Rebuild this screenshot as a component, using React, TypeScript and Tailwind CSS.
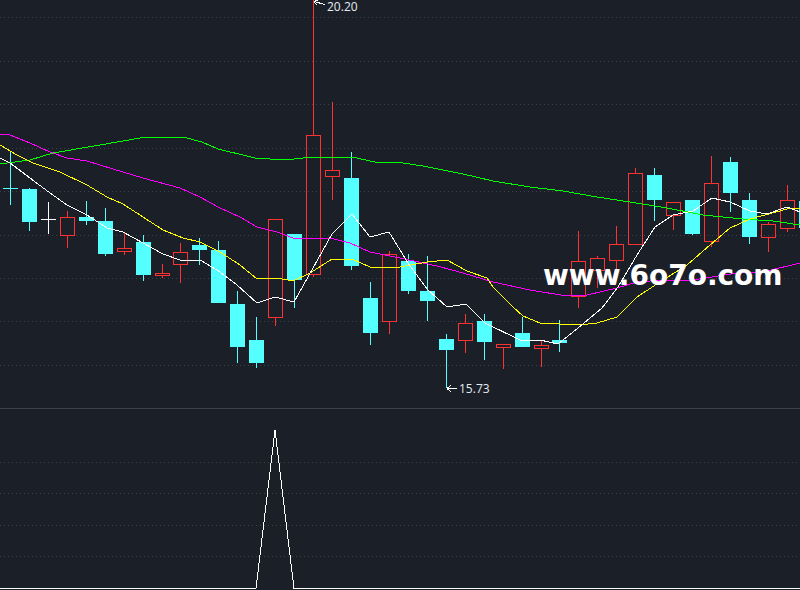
type Candle = [kind: "up" | "down" | "flat" | "flatw", high: number, low: number, top: number, bottom: number]

const candles: Candle[] = [
  ["flat", 152, 205, 188, 189],
  ["down", 188, 231, 189, 222],
  ["flatw", 202, 234, 219, 220],
  ["up", 211, 248, 217, 235],
  ["down", 201, 225, 217, 221],
  ["down", 208, 256, 221, 254],
  ["up", 233, 255, 248, 251],
  ["down", 235, 281, 242, 275],
  ["up", 264, 278, 273, 275],
  ["up", 243, 283, 252, 264],
  ["down", 238, 265, 245, 250],
  ["down", 241, 303, 250, 303],
  ["down", 291, 363, 304, 347],
  ["down", 317, 368, 340, 363],
  ["up", 219, 326, 219, 317],
  ["down", 234, 308, 234, 280],
  ["up", 0, 277, 135, 274],
  ["up", 102, 200, 170, 176],
  ["down", 152, 270, 178, 266],
  ["down", 282, 345, 298, 333],
  ["up", 251, 334, 254, 321],
  ["down", 254, 294, 261, 291],
  ["down", 256, 321, 291, 301],
  ["down", 334, 388, 339, 350],
  ["up", 314, 353, 323, 340],
  ["down", 314, 360, 321, 342],
  ["up", 344, 369, 344, 347],
  ["down", 317, 347, 333, 347],
  ["up", 341, 367, 345, 348],
  ["down", 320, 352, 340, 343],
  ["up", 231, 308, 261, 296],
  ["up", 256, 288, 258, 270],
  ["up", 226, 273, 244, 260],
  ["up", 168, 244, 173, 244],
  ["down", 168, 221, 175, 200],
  ["up", 202, 230, 202, 215],
  ["down", 200, 235, 200, 234],
  ["up", 156, 247, 183, 241],
  ["down", 157, 212, 162, 193],
  ["down", 193, 244, 200, 237],
  ["up", 222, 252, 224, 237],
  ["up", 185, 232, 200, 228],
  ["down", 201, 228, 201, 228],
]

const green = "0,164 30,160 53,153 100,145 140,138 153,137 183,137 202,142 218,149 255,158 285,160 303,158 323,157 352,157 375,162 403,163 423,166 443,170 463,174 493,181 530,187 563,191 597,197 630,202 667,208 703,215 743,219 773,221 800,225"
const magenta = "0,134 10,135 30,143 50,152 67,158 87,161 113,169 143,178 180,188 200,197 220,208 240,217 257,227 277,232 293,238 330,238 350,243 370,252 400,258 437,266 463,273 493,282 530,290 567,296 587,295 617,288 637,282 663,280 693,280 737,273 763,272 800,263"
const yellow = "0,145 17,155 33,163 60,172 87,185 107,197 123,204 143,217 163,230 183,238 200,242 220,252 240,265 257,279 277,278 293,281 310,273 332,259 352,259 370,267 400,267 427,262 447,260 467,271 487,278 493,287 513,307 523,316 540,323 560,324 580,325 597,323 617,317 637,297 663,280 687,265 710,245 730,228 750,219 787,209 800,208"
const white = "0,158 10,163 30,178 50,193 67,205 87,215 107,228 123,232 143,243 163,254 180,260 202,261 220,272 237,285 257,303 275,297 294,302 313,268 332,234 352,214 370,237 389,232 408,263 427,289 447,307 466,304 485,323 522,341 540,340 558,344 578,328 602,308 618,287 637,255 655,227 673,215 693,211 712,198 730,202 750,211 767,214 787,207 800,212"

const RED = "#ff3232"
const CYAN = "#54ffff"

function CandleMark({ c, i }: { c: Candle; i: number }) {
  const [kind, high, low, top, bottom] = c
  const x = Math.floor(10.4 + 18.95 * i)
  if (kind === "flat" || kind === "flatw") {
    const color = kind === "flat" ? CYAN : "#ffffff"
    return (
      <g fill={color}>
        <rect x={x} y={high} width={1} height={low - high} />
        <rect x={x - 7} y={top} width={15} height={1} />
      </g>
    )
  }
  const color = kind === "up" ? RED : CYAN
  return (
    <g>
      <rect x={x} y={high} width={1} height={Math.max(top - high, 0)} fill={color} />
      <rect x={x} y={bottom} width={1} height={Math.max(low - bottom, 0)} fill={color} />
      {kind === "up" ? (
        <rect x={x - 6.5} y={top + 0.5} width={14} height={bottom - top} fill="none" stroke={color} />
      ) : (
        <rect x={x - 7} y={top} width={15} height={bottom - top} fill={color} />
      )}
    </g>
  )
}

function GridLine({ y }: { y: number }) {
  return <line x1={0} x2={800} y1={y + 0.5} y2={y + 0.5} stroke="#3d424b" strokeDasharray="1 3" />
}

export default function App() {
  return (
    <div className="flex h-[590px] w-[800px] flex-col overflow-hidden bg-[#1b1f28] font-['Open_Sans','Liberation_Sans',sans-serif]">
      {/* price panel */}
      <div className="relative h-[409px] shrink-0 border-b border-[#3a424d]">
        <svg width={800} height={408} className="block" shapeRendering="crispEdges">
          {[17, 61, 104, 148, 191, 235, 278, 321, 365].map((y) => (
            <GridLine key={y} y={y} />
          ))}
          {candles.map((c, i) => (
            <CandleMark key={i} c={c} i={i} />
          ))}
          <polyline points={green} fill="none" stroke="#00ff00" />
          <polyline points={magenta} fill="none" stroke="#ff00ff" />
          <polyline points={yellow} fill="none" stroke="#ffff00" />
          <polyline points={white} fill="none" stroke="#ffffff" />
          <path d="M314 1.5L325 4.5M314 1.5L318 0M314 1.5L317 5" fill="none" stroke="#ffffff" />
          <path d="M447 388.5H457M447 388.5L451 385.5M447 388.5L451 391.5" fill="none" stroke="#ffffff" />
        </svg>
        <span className="absolute left-[327px] top-px text-xs leading-[12px] text-[#e6ecf2]">20.20</span>
        <span className="absolute left-[459px] top-[383px] text-xs leading-[12px] text-[#e6ecf2]">15.73</span>
        <span className="absolute left-[543px] top-[257px] font-['DejaVu_Sans',sans-serif] text-[28px] leading-[38px] font-bold whitespace-nowrap text-white">
          www.6o7o.com
        </span>
      </div>
      {/* indicator panel */}
      <div className="flex-1">
        <svg width={800} height={181} className="block" shapeRendering="crispEdges">
          {[53, 84, 116, 147].map((y) => (
            <GridLine key={y} y={y} />
          ))}
          <polyline points="0,179.5 256,179.5 275,21 294,179.5 800,179.5" fill="none" stroke="#ffffff" />
        </svg>
      </div>
    </div>
  )
}
